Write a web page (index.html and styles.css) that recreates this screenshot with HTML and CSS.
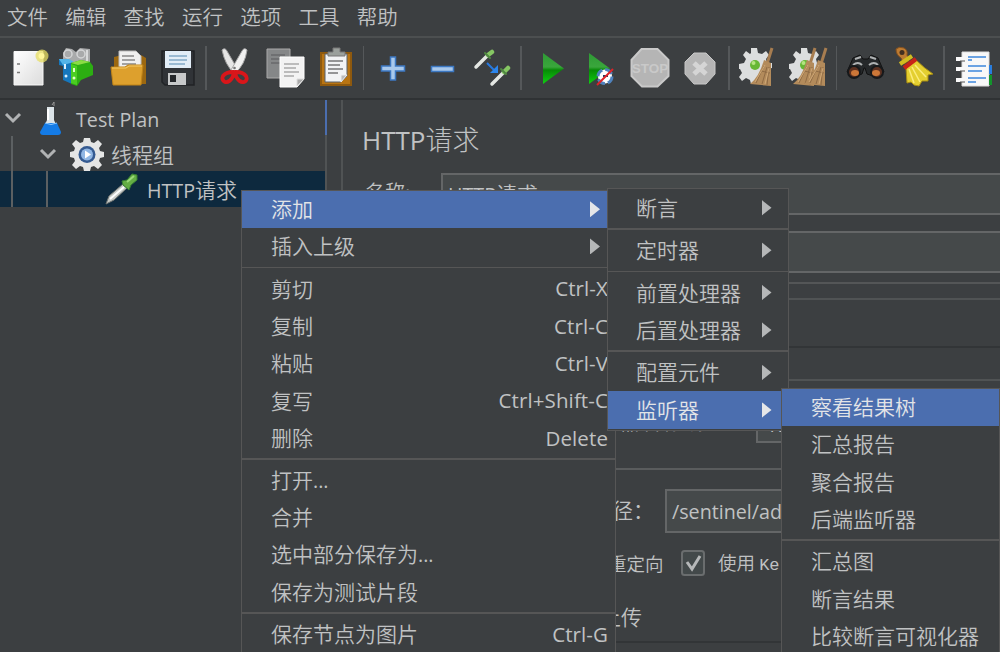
FILE: index.html
```html
<!DOCTYPE html>
<html lang="zh-CN">
<head>
<meta charset="utf-8">
<title>JMeter</title>
<link rel="stylesheet" href="styles.css">
</head>
<body>
<div class="app">
  <nav class="menubar"><span>文件</span><span>编辑</span><span>查找</span><span>运行</span><span>选项</span><span>工具</span><span>帮助</span></nav>
  <div class="toolbar">
    <svg class="tool" viewBox="0 0 50 60"><defs><linearGradient id="paper" x2="1" y2="1"><stop stop-color="#fff"/><stop offset="1" stop-color="#dcdcdc"/></linearGradient><linearGradient id="green" x2="0" y2="1"><stop stop-color="#2e9a35"/><stop offset=".45" stop-color="#3aa63c"/><stop offset=".55" stop-color="#078a06"/><stop offset="1" stop-color="#0fd012"/></linearGradient></defs><path d="M12 13.500H41V47H12Z" fill="url(#paper)" stroke="#f8f8f8"/><path d="M15 26h3M15 34.500h3" stroke="#777" stroke-width="1.500"/><circle cx="40" cy="18" r="6.500" fill="#e8df62" opacity=".75"/><circle cx="39.500" cy="18" r="3" fill="#fff79a"/></svg>
    <svg class="tool" viewBox="0 0 50 60"><path d="M11 15l3-5 6 1 4 3 4-4 10 1v16H11z" fill="#a9aaab"/><circle cx="16" cy="16" r="4" fill="none" stroke="#d4d5d6" stroke-width="1.500"/><circle cx="29" cy="16" r="4" fill="none" stroke="#d4d5d6" stroke-width="1.500"/><path d="M35 12v12" stroke="#d8d9da" stroke-width="2"/><path d="M7 21l13 3v22L11 42V28L7 27z" fill="#1677bd"/><path d="M7 21h10l5 3-11 3z" fill="#54b4e8"/><path d="M13 26v5" stroke="#d9f0ff" stroke-width="2"/><circle cx="14" cy="38" r="1.500" fill="#d9f0ff"/><path d="M19 25l10-3 9 2 3 4v9l-12 5-4 6-6-2z" fill="#2cae12"/><path d="M19 25l10-3 9 2-12 3z" fill="#8bdc45"/><path d="M19 26l6 2v19l-6-2z" fill="#4bcd22"/><path d="M22 30v4" stroke="#dfffc8" stroke-width="2"/><circle cx="22" cy="40" r="1.500" fill="#dfffc8"/></svg>
    <svg class="tool" viewBox="0 0 50 60"><path d="M12 19l8-2h19l5 3v26H12z" fill="#9c6810"/><path d="M17 13h17l5 5v12H17z" fill="#f0f0f0" stroke="#bcbcbc"/><path d="M20 18h12M20 22h13M20 26h14" stroke="#888" stroke-width="1.500"/><path d="M9 29h14l3-2h15l-2 20H11z" fill="#dda02d" stroke="#c18417"/><path d="M10 30h14l3-2h13" stroke="#f6cb69" fill="none"/></svg>
    <svg class="tool" viewBox="0 0 50 60"><path d="M10 13h32v34H13l-3-3z" fill="#303337" stroke="#202326" stroke-width="1.500"/><path d="M13 13h26v17H13z" fill="#e2edf7"/><path d="M17 18h18M17 22h18M17 26h16" stroke="#83a9c8" stroke-width="1.500"/><path d="M16 35h18v12H16z" fill="#c7c9ca"/><path d="M18 37h6v7h-6z" fill="#24272a"/></svg>
    <i class="divider"></i>
    <svg class="tool" viewBox="0 0 50 60"><path d="M12 12q3-3 5 1l11 19-4 3Q15 27 12 12z" fill="#e5e5e5" stroke="#9e9e9e"/><path d="M37 12q-3-3-5 1L21 32l4 3Q35 27 37 12z" fill="#f1f1f1" stroke="#a9a9a9"/><circle cx="24.500" cy="30" r="1.300" fill="#777"/><path d="M23 34q1 3-1 6-3 5-7 4-4-2-2-6 3-4 10-4zM26 34q-1 3 1 6 3 5 7 4 4-2 2-6-3-4-10-4z" fill="none" stroke="#d9161a" stroke-width="3.800"/></svg>
    <svg class="tool" viewBox="0 0 50 60"><path d="M7 11h23v29H7z" fill="#858788" stroke="#aaa"/><path d="M11 17h14M11 21h13M11 25h12" stroke="#686a6b" stroke-width="1.500"/><path d="M20 19h24v22l-7 8H20z" fill="#f3f3f3" stroke="#fff"/><path d="M24 26h15M24 30h12M24 34h15M24 38h10" stroke="#aaa" stroke-width="1.300"/><path d="M37 48v-7h7z" fill="#aaa" stroke="#ddd"/></svg>
    <svg class="tool" viewBox="0 0 50 60"><path d="M11 15h30v32H11z" fill="#b87412" stroke="#8e590e" stroke-width="2"/><path d="M15 16h22v22l-6 6H15z" fill="#f2f3f4" stroke="#58606a"/><path d="M18 23h15M18 27h12M18 31h15M18 35h10" stroke="#777" stroke-width="1.500"/><path d="M31 44v-7h6z" fill="#bbb" stroke="#eee"/><path d="M18 18v-4h5v-4h7v4h5v4z" fill="#9ba09c" stroke="#777"/></svg>
    <i class="divider"></i>
    <svg class="tool" viewBox="0 0 50 60"><path d="M23.500 19h5v9h9v5h-9v9h-5v-9h-9v-5h9z" fill="#a9c9ec" stroke="#3c78c2" stroke-width="1.500"/></svg>
    <svg class="tool" viewBox="0 0 50 60"><path d="M14.500 28.500h22v5h-22z" fill="#a9c9ec" stroke="#3c78c2" stroke-width="1.500"/></svg>
    <svg class="tool" viewBox="0 0 50 60"><g fill="none" stroke-linecap="round"><path d="M9 29L20 18M25 46L36 35" stroke="#e4e7e3" stroke-width="3.500"/><path d="M21 17L25 14M37 34L41 30" stroke="#86c763" stroke-width="4.500"/><path d="M18 15l5 5M34 31l5 5" stroke="#508742" stroke-width="2"/></g><path d="M20 25l7 7" stroke="#2779df" stroke-width="2"/><path d="M31 27v8h-8z" fill="#2c86ee"/></svg>
    <i class="divider"></i>
    <svg class="tool" viewBox="0 0 50 60"><path d="M18 15L39 30.500 18 46z" fill="url(#green)"/></svg>
    <svg class="tool" viewBox="0 0 50 60"><path d="M14 15L35 30.500 14 46z" fill="url(#green)"/><circle cx="30" cy="38.500" r="7" fill="#fff" stroke="#4f82bd" stroke-width="3" stroke-dasharray="8 3"/><path d="M28 38h5" stroke="#274060" stroke-width="2"/><path d="M22 47L38 31" stroke="#df2228" stroke-width="2"/></svg>
    <svg class="tool" viewBox="0 0 50 60"><path d="M16.500 11h16l11 11v16l-11 10.500H17L6.500 38V22z" fill="#b5b5b5" stroke="#c9c9c9" stroke-width="2"/><text x="25" y="35" text-anchor="middle" class="stop">STOP</text></svg>
    <svg class="tool" viewBox="0 0 50 60"><path d="M19 15h12l9 9v12l-9 10H19l-9-10V24z" fill="#b5b5b5" stroke="#c7c7c7"/><path d="M19 25L31 36M31 25L19 36" stroke="#d5d5d5" stroke-width="5"/></svg>
    <i class="divider"></i>
    <svg class="tool" viewBox="0 0 50 60"><g id="sweep"><path d="M18 10h6l1 5 4 1 4-3 3 4-3 4 1 4h5v5l-5 1-1 4 3 4-4 4-4-3-4 2-1 4h-5l-1-4-4-2-4 3-3-4 3-4-2-4H6v-5l5-1 2-4-3-4 3-4 4 3 1-1z" fill="#dcdede"/><circle cx="22" cy="27" r="5" fill="#66b735"/><circle cx="20.500" cy="25" r="2" fill="#b4e480"/></g><g id="broom"><path d="M39 10L34 26" stroke="#a77d50" stroke-width="3"/><path d="M31 22l7 3 0 23-21-2q9-7 14-24z" fill="#b38b5b"/><path d="M31 28l-8 17M34 29l-5 17M36 29l-2 18M28 33l9 2" stroke="#8f6b45"/><path d="M32 27l-10 17M36 30l-4 16" stroke="#cfa877"/></g></svg>
    <svg class="tool" viewBox="0 0 50 60"><use href="#sweep"/><use href="#broom" x="-7"/><use href="#broom" x="4"/></svg>
    <i class="divider"></i>
    <svg class="tool" viewBox="0 0 50 60"><path d="M13 20l7-3 3 4h5l3-4 7 3 6 14-8 5-9-3-2-6h-1l-2 6-9 3-6-5z" fill="#25282a" stroke="#111"/><path d="M15 21l6-2M36 21l-6-2M13 27q5-4 9 0M29 27q5-4 9 0" stroke="#aeb1b2" stroke-width="2" fill="none"/><circle cx="14" cy="34" r="6" fill="#5c3020" stroke="#17191b" stroke-width="2"/><circle cx="37" cy="34" r="6" fill="#5c3020" stroke="#17191b" stroke-width="2"/><ellipse cx="15" cy="35" rx="4" ry="3" fill="#cc7738"/><ellipse cx="36" cy="35" rx="4" ry="3" fill="#cc7738"/></svg>
    <svg class="tool" viewBox="0 0 50 60"><path d="M6 11q3-3 8-1 4 2 3 7l2 6-5 3-3-6q-5-3-5-9z" fill="#bd7b32" stroke="#83501e"/><circle cx="12" cy="14.500" r="2.500" fill="#432f20"/><path d="M16 30L26 22q8 8 17 14l-5 1v6l-6 0-3 5-5-1-3-3-4 1z" fill="#e4cf30" stroke="#a98e13"/><path d="M19 31l5 14M22 29l8 15M25 27l11 12" stroke="#fbec7c" stroke-width="1.500"/><path d="M10 26L22 18" stroke="#d1bd20" stroke-width="4"/><path d="M14 30L26 21" stroke="#c92318" stroke-width="4.500"/></svg>
    <i class="divider"></i>
    <svg class="tool" viewBox="0 0 50 60"><path d="M14 14h27v34H14z" fill="#f8f8f8" stroke="#ddd"/><path d="M41 27h3v9h-3z" fill="#287dde"/><path d="M41 37h3v10h-3z" fill="#13952c"/><path d="M8 21h7M8 31h7M8 42h7" stroke="#fafafa" stroke-width="4"/><path d="M12 23h5M12 33h5M12 44h5" stroke="#555"/><path d="M20 19h18M20 22h4M20 28h18M20 33h14M20 40h18M20 44h8" stroke="#3d86dc" stroke-width="1.700"/></svg>
  </div>

  <main class="workspace">
    <aside class="tree">
      <div class="node root"><svg class="chevron" viewBox="0 0 20 20"><path d="M3 6l7 7 7-7"/></svg>
        <svg class="nicon" viewBox="0 0 36 36"><path d="M19 4l2-3v4" stroke="#999" fill="none"/><path d="M14 6h7v13l6 14H8l6-14z" fill="#dce4e8"/><path d="M12 22h12l4 9q0 3-3 3H10q-3 0-3-3z" fill="#147be6"/><path d="M12 22q6 3 12 0" stroke="#8dc8ff" fill="none"/><path d="M15 8v11" stroke="#fff" stroke-width="2"/></svg><span class="lat">Test Plan</span></div>
      <div class="node group"><svg class="chevron" viewBox="0 0 20 20"><path d="M3 6l7 7 7-7"/></svg>
        <svg class="nicon" viewBox="0 0 36 36"><path d="M15 2h6l1 4 3 1 4-3 4 4-3 4 1 3 4 1v5l-4 1-1 3 3 4-4 4-4-3-3 1-1 4h-6l-1-4-3-1-4 3-4-4 3-4-1-3-4-1v-5l4-1 1-3-3-4 4-4 4 3 3-1z" fill="#e4e5e5"/><circle cx="18" cy="18.500" r="8.500" fill="#345a91"/><circle cx="18" cy="18.500" r="6" fill="#91b7e4"/><path d="M16 14.500l6 4-6 4z" fill="#fff"/></svg><span>线程组</span></div>
      <div class="node sampler"><svg class="nicon" viewBox="0 0 36 36"><path d="M3 33l3-8L20 13l4 4-13 12z" fill="#c7cbc8" stroke="#6e7370"/><path d="M7 28L21 16" stroke="#fff" stroke-width="2"/><path d="M19 10l5-1 5-6 5 1v5l-6 5-2 5-6-5z" fill="#64ad44" stroke="#367f31"/><path d="M24 11l7-6" stroke="#9bd979" stroke-width="2"/></svg><span><b class="lat">HTTP</b>请求</span></div>
      <i class="guide outer"></i><i class="guide inner"></i>
    </aside>
    <div class="split"></div>
    <section class="form">
      <h1><b class="lat">HTTP</b>请求</h1>
      <div class="field name"><label>名称:</label><div class="input"><b class="lat">HTTP</b>请求</div></div>
      <div class="field note"><div class="input"></div></div>
      <div class="tabs"><i></i></div>
      <div class="pad"></div>
      <div class="server"><div class="srow"><span>器名称或<b class="mono">IP</b>：</span><div class="input"><b class="lat">19</b></div></div></div>
      <div class="request">
        <div class="path"><span>径：</span><div class="input"><b class="lat">/sentinel/ad</b></div></div>
        <div class="checks"><span>重定向</span><svg class="check" viewBox="0 0 24 26"><rect x="1" y="1" width="22" height="24" rx="2.500"/><path d="M6 12l5 7 8-13"/></svg><span>使用 <b class="mono">Ke</b></span></div>
        <div class="upload">上传</div>
      </div>
    </section>
  </main>
</div>

<div class="popup main-popup">
  <div class="item on"><span>添加</span><i class="arrow"></i></div>
  <div class="item"><span>插入上级</span><i class="arrow"></i></div>
  <hr>
  <div class="item"><span>剪切</span><b class="lat">Ctrl-X</b></div>
  <div class="item"><span>复制</span><b class="lat">Ctrl-C</b></div>
  <div class="item"><span>粘贴</span><b class="lat">Ctrl-V</b></div>
  <div class="item"><span>复写</span><b class="lat">Ctrl+Shift-C</b></div>
  <div class="item"><span>删除</span><b class="lat">Delete</b></div>
  <hr>
  <div class="item"><span>打开<b class="lat">...</b></span></div>
  <div class="item"><span>合并</span></div>
  <div class="item"><span>选中部分保存为<b class="lat">...</b></span></div>
  <div class="item"><span>保存为测试片段</span></div>
  <hr>
  <div class="item"><span>保存节点为图片</span><b class="lat">Ctrl-G</b></div>
</div>
<div class="popup add-popup">
  <div class="item"><span>断言</span><i class="arrow"></i></div>
  <hr>
  <div class="item"><span>定时器</span><i class="arrow"></i></div>
  <hr>
  <div class="item"><span>前置处理器</span><i class="arrow"></i></div>
  <div class="item"><span>后置处理器</span><i class="arrow"></i></div>
  <hr>
  <div class="item"><span>配置元件</span><i class="arrow"></i></div>
  <div class="item on"><span>监听器</span><i class="arrow"></i></div>
</div>
<div class="popup listener-popup">
  <div class="item on"><span>察看结果树</span></div>
  <div class="item"><span>汇总报告</span></div>
  <div class="item"><span>聚合报告</span></div>
  <div class="item"><span>后端监听器</span></div>
  <hr>
  <div class="item"><span>汇总图</span></div>
  <div class="item"><span>断言结果</span></div>
  <div class="item"><span>比较断言可视化器</span></div>
</div>
</body>
</html>
```
FILE: styles.css
```css
* { box-sizing: border-box; }
body { margin: 0; width: 1000px; height: 652px; overflow: hidden; position: relative; background: #3c3f41; color: #c0c2c3; font: 350 21px/1 "Noto Sans CJK SC", sans-serif; white-space: nowrap; }
b, h1 { font-weight: inherit; }
i { display: block; }
.lat { font: 400 19.7px/1 "Open Sans", sans-serif; }
.mono { font: 400 17px/1 "Liberation Mono", monospace; }
.app { height: 652px; display: flex; flex-direction: column; overflow: hidden; }
.menubar { height: 38px; flex: none; display: flex; align-items: center; gap: 17.300px; padding: 0 0 3px 7px; font-size: 20.500px; border-bottom: 2px solid #4c4f50; }
.toolbar { height: 60px; flex: none; display: flex; padding-left: 2px; }
.tool { width: 50px; height: 60px; flex: none; }
.stop { font: bold 13.500px "Liberation Sans", sans-serif; fill: #c9c9c9; }
.divider { flex: none; width: 1.700px; height: 44px; margin: 8px 3px; background: #55585a; }
.workspace { flex: 1; min-height: 0; display: flex; border-top: 2px solid #2f3234; }
.tree { width: 325px; flex: none; position: relative; padding-top: 1px; }
.node { height: 35.300px; display: flex; align-items: center; }
.node:first-child { height: 35px; }
.node > span { padding-top: 1px; }
.chevron { width: 20px; height: 20px; fill: none; stroke: #b1b3b4; stroke-width: 3px; }
.nicon { width: 36px; height: 36px; }
.root { padding: 1px 0 0 3px; }
.root .chevron { margin-right: 10px; margin-top: -3px; }
.root .nicon { margin-right: 7px; }
.group { padding-left: 38px; }
.group .chevron { margin-right: 11px; }
.group .nicon { margin-right: 6px; }
.sampler { padding-left: 103px; background: #0d293e; }
.sampler .nicon { margin-right: 8px; }
.guide { position: absolute; width: 2px; background: #5c6062; }
.outer { left: 11px; top: 36px; height: 71px; }
.inner { left: 46px; top: 71px; height: 36px; }
.split { width: 18px; flex: none; border-right: 2px solid #505354; background: linear-gradient(#4b6eaf 35px, #505354 35px) no-repeat 0 0 / 2px 100%; }
.form { flex: 1; min-width: 0; overflow: hidden; }
.form h1 { margin: 0; height: 73px; padding: 24px 0 0 19px; font-size: 27px; font-weight: 300; line-height: 30px; }
.form h1 .lat { font-size: 26px; }
.field { display: flex; padding-left: 98px; }
.field label { width: 98px; margin-left: -98px; flex: none; padding: 9px 0 0 22px; font-size: 20px; }
.input { background: #45494a; border: 2px solid #646667; }
.field .input { flex: 1; height: 42px; margin-right: -5px; padding: 8px 0 0 5px; }
.note { margin-top: 16px; }
.tabs { height: 66px; margin-top: 9px; border-top: 2px solid #545657; border-bottom: 2px solid #323537; padding-top: 14px; }
.tabs i { height: 2px; background: #505354; }
.pad { height: 31px; }
.server { height: 91px; border-top: 2px solid #505354; border-bottom: 2px solid #5a5c5d; padding-top: 22px; }
.srow { display: flex; align-items: center; }
.srow > span { width: 394px; flex: none; padding-left: 277px; letter-spacing: 1px; font-size: 20px; }
.srow .input { margin-left: 19px; flex: none; width: 250px; height: 40px; padding: 8px 8px; }
.request { height: 173px; border-bottom: 2px solid #323537; padding-top: 19px; }
.path { display: flex; align-items: center; }
.path > span { width: 322px; flex: none; padding: 0 0 3px 269px; }
.path .input { flex: none; width: 350px; height: 44px; padding: 9px 5px; }
.checks { display: flex; align-items: center; margin-top: 17px; padding-left: 265px; font-size: 18.500px; }
.checks span:first-child { width: 56px; }
.check { width: 24px; height: 26px; margin: 0 13px 0 17px; fill: #43494a; stroke: #6a6d6e; stroke-width: 2px; }
.check path { fill: none; stroke: #b6b8b9; stroke-width: 3px; }
.upload { margin-top: 30px; padding-left: 257px; }
.popup { position: absolute; background: #3c3f41; border: 1.500px solid #565656; overflow: hidden; }
.main-popup { left: 241px; top: 189.500px; width: 375px; height: 480px; }
.add-popup { left: 607px; top: 188px; width: 181.500px; height: 242.500px; }
.listener-popup { left: 781px; top: 387.500px; width: 218.500px; height: 290px; }
.item { height: 37.300px; display: flex; align-items: center; justify-content: space-between; padding: 0 7px 0 29px; }
.item > span { padding-bottom: 1px; }
.item > .lat { font-size: 20.500px; letter-spacing: .1px; }
.item.on { background: #4b6eaf; color: #e2e4e7; }
.add-popup .item { padding: 0 16px 0 28px; height: 37.500px; }
.main-popup .arrow { margin-right: 8px; }
.arrow { width: 10px; height: 16px; background: #b5b7b8; clip-path: polygon(0 0, 100% 50%, 0 100%); }
.on .arrow { background: #e5e6e8; }
hr { height: 1.500px; margin: 1.700px 0; border: 0; background: #565656; }
```
